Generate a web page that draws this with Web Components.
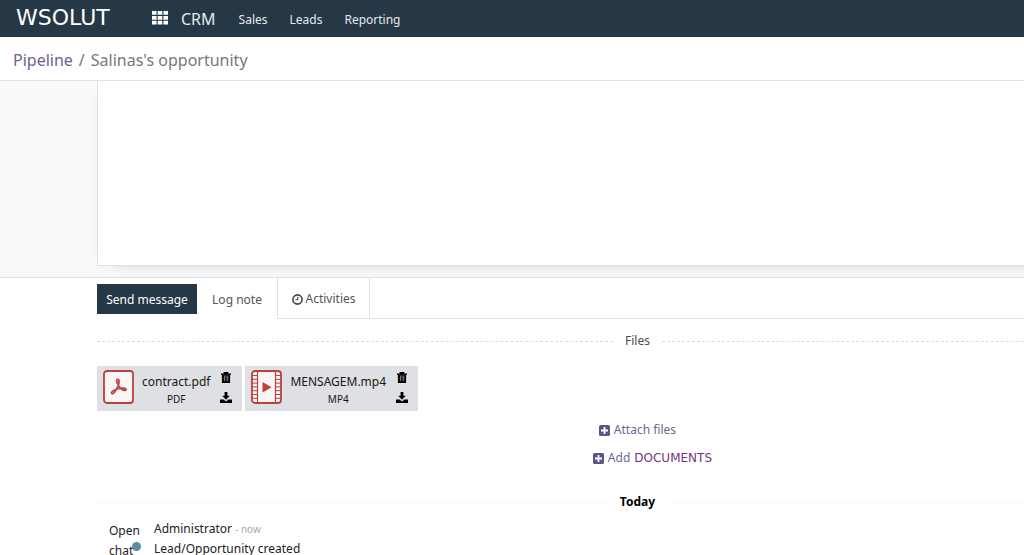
<!DOCTYPE html>
<html lang="en">
<head>
<meta charset="utf-8">
<title>Salinas's opportunity</title>
<style>
body { margin: 0; background: #fff; font-family: "Noto Sans", sans-serif; font-size: 12px; line-height: 20px; color: #4c4c4c; overflow: hidden; }
</style>
</head>
<body>
<crm-page></crm-page>
<script>
const define = (name, html) => {
  const t = document.createElement('template');
  t.innerHTML = html;
  customElements.define(name, class extends HTMLElement {
    constructor() {
      super();
      this.attachShadow({ mode: 'open' }).append(t.content.cloneNode(true));
      this.shadowRoot.querySelectorAll('[data-attr]').forEach(n => {
        n.textContent = this.getAttribute(n.dataset.attr) || '';
      });
    }
  });
};

define('crm-navbar', `
<style>
:host { display: flex; align-items: center; height: 37px; padding-left: 16px; background: #263746; border-bottom: 1px solid #1f2f3b; box-sizing: border-box; color: #e4eaee; }
a { color: inherit; text-decoration: none; }
.logo { width: 136px; font: 22px/24px "DejaVu Sans", sans-serif; color: #fff; }
button { display: flex; padding: 0; border: 0; background: none; color: #fff; margin-right: 13px; }
.app { font-size: 16px; margin-right: 23px; padding-top: 2px; }
nav { display: flex; gap: 22px; padding-top: 3px; }
</style>
<a class="logo" href="#">WSOLUT</a>
<button aria-label="Apps"><svg width="16" height="14" viewBox="0 0 16 14" fill="currentColor"><path d="M0 0h4.6v3.8H0zM5.7 0h4.6v3.8H5.7zM11.4 0H16v3.8h-4.6zM0 4.9h4.6v3.8H0zM5.7 4.9h4.6v3.8H5.7zM11.4 4.9H16v3.8h-4.6zM0 9.8h4.6v3.8H0zM5.7 9.8h4.6v3.8H5.7zM11.4 9.8H16v3.8h-4.6z"/></svg></button>
<a class="app" href="#">CRM</a>
<nav><a href="#">Sales</a><a href="#">Leads</a><a href="#">Reporting</a></nav>`);

define('crm-breadcrumb', `
<style>
:host { display: flex; gap: 6px; padding: 12px 13px 9px; font-size: 16px; line-height: 22px; color: #777; border-bottom: 1px solid #dfe1e3; }
a { color: #6f6294; text-decoration: none; }
</style>
<a href="#">Pipeline</a><span>/</span><span>Salinas's opportunity</span>`);

define('crm-sheet', `
<style>
:host { display: block; background: #f8f9fb; padding: 0 97px 11px; border-bottom: 1px solid #dde0e4; overflow: hidden; }
div { min-height: 184px; background: #fff; border: 1px solid #dfe1e3; border-top: 0; box-shadow: 0 5px 20px -15px rgba(0, 0, 0, .4); }
</style>
<div></div>`);

define('crm-tabs', `
<style>
:host { display: flex; height: 41px; }
button { font: inherit; line-height: 20px; color: #555; background: none; border: 0; padding: 0; }
.send { align-self: flex-start; margin-top: 6px; padding-top: 1px; width: 100px; height: 30px; background: #263746; color: #fff; }
.note { width: 80px; padding-top: 2px; }
.act { display: flex; align-items: center; justify-content: center; gap: 3px; width: 93px; padding-top: 2px; border: solid #e1e3e5; border-width: 0 1px 1px; }
.rest { flex: 1; border-bottom: 1px solid #e1e3e5; }
</style>
<button class="send">Send message</button><button class="note">Log note</button><button class="act"><svg width="11" height="11" viewBox="0 0 11 11" fill="none" stroke="#444"><circle cx="5.5" cy="5.5" r="4.6" stroke-width="1.6"/><path d="M5.7 2.8V5.8H3.4" stroke-width="1.1"/></svg>Activities</button><span class="rest"></span>`);

define('crm-divider', `
<style>
:host { display: flex; align-items: center; gap: 12px; }
:host::before, :host::after { content: ""; flex: 1; border-top: 1px var(--line, dashed #d9dbdc); }
</style><slot></slot>`);

define('crm-file', `
<style>
:host { display: flex; height: 45px; box-sizing: border-box; padding: 4px 10px 0 6px; background: #dee0e4; color: #161616; }
.text { display: flex; flex-direction: column; align-items: center; margin: 2px 10px 0 8px; }
.name { line-height: 20px; }
.type { font-size: 10px; line-height: 14px; }
.tools { display: flex; flex-direction: column; gap: 9px; padding-top: 2px; }
button { display: flex; justify-content: center; width: 12px; padding: 0; border: 0; background: none; color: #000; }
</style>
<slot></slot>
<div class="text"><span class="name" data-attr="name"></span><span class="type" data-attr="type"></span></div>
<div class="tools">
<button aria-label="Delete"><svg width="10" height="11" viewBox="0 0 10 11" fill="none" stroke="currentColor"><path d="M0 2.2h10M3.3 2V.7h3.4V2" stroke-width="1.4"/><path d="M1.6 2.5v7.7h6.8V2.5" fill="#222" stroke-width="1.4"/><path d="M3.6 4v4.600M6.400 4v4.600" stroke="#aaa" stroke-width=".7"/></svg></button>
<button aria-label="Download"><svg width="12" height="12" viewBox="0 0 12 12" fill="currentColor"><path d="M4.600 0h2.800v3.800h2.400L6 7.800 2.200 3.800h2.400zM0 7.400h3.600L6 9.600l2.400-2.200H12V11H0z"/></svg></button>
</div>`);

define('icon-pdf', `
<style>:host, svg { display: block; }</style>
<svg width="31" height="34" viewBox="0 0 31 34" fill="none" stroke="#b8423e"><rect x="1" y="1" width="29" height="32" rx="3" fill="#faf6f5" stroke-width="1.800"/><path d="M14.200 9.500c3-.8 1.800 4.200.5 7-1.200 2.900-3.200 7.500-5.500 7.300-2.600-1.200 2.300-4.200 5.500-5 3.200-.8 8.200-1.200 8.400.7-.3 2.200-4.600.3-6.600-2.500-1.700-2.400-4-6.900-2.300-7.500z" stroke-width="1.700"/></svg>`);

define('icon-video', `
<style>:host, svg { display: block; }</style>
<svg width="31" height="34" viewBox="0 0 31 34" fill="none" stroke="#b8423e"><rect x="1" y="1" width="29" height="32" rx="3" fill="#faf6f5" stroke-width="1.800"/><path d="M6.500 1v32M24.500 1v32" stroke-width="1.200"/><path d="M1 5.500h5.500M1 9.300h5.500M1 13.100h5.500M1 16.900h5.500M1 20.700h5.500M1 24.500h5.500M1 28.300h5.500M24.500 5.500H30M24.500 9.300H30M24.500 13.100H30M24.500 16.900H30M24.500 20.700H30M24.500 24.500H30M24.500 28.300H30"/><path d="M11.500 12l9 5.300-9 5.300z" fill="#c03f39" stroke="none"/></svg>`);

define('crm-add', `
<style>
:host { display: flex; justify-content: center; }
a { display: flex; align-items: center; gap: 4px; color: #6c6594; text-decoration: none; }
</style>
<a href="#"><svg width="11" height="11" viewBox="0 0 11 11"><rect width="11" height="11" rx="1.600" fill="#5c5488"/><path d="M5.500 2v7M2 5.500h7" stroke="#fff" stroke-width="1.800"/></svg><slot></slot></a>`);

define('crm-message', `
<style>
:host { display: flex; padding: 7px 12px 0; color: #222; }
.avatar { position: relative; width: 45px; padding-top: 2px; }
.avatar span { display: block; width: 32px; }
.avatar i { position: absolute; left: 23px; top: 23px; width: 9px; height: 9px; border-radius: 50%; background: #5a8ca6; }
p { margin: 0; line-height: 19px; }
small { font-size: 10px; color: #aaa; }
</style>
<div class="avatar"><span>Open chat</span><i></i></div>
<div><p>Administrator <small>- now</small></p><p>Lead/Opportunity created</p></div>`);

define('crm-page', `
<style>
:host { display: block; overflow: hidden; }
.wide { width: 124.5vw; }
.chatter { padding: 0 97px; }
crm-divider { margin-top: 12px; }
.files { display: flex; gap: 3px; margin: 15px 0 9px; }
.docs { margin-top: 8px; padding-left: 30px; }
.brand { font: 12px/20px "DejaVu Sans", sans-serif; color: #76347e; }
.day { margin-top: 24px; --line: solid #f8f8f8; }
h2 { margin: 0; font-size: 12px; line-height: 20px; color: #000; }
</style>
<crm-navbar></crm-navbar>
<crm-breadcrumb></crm-breadcrumb>
<div class="wide">
<crm-sheet></crm-sheet>
<div class="chatter">
<crm-tabs></crm-tabs>
<crm-divider>Files</crm-divider>
<div class="files">
<crm-file name="contract.pdf" type="PDF"><icon-pdf></icon-pdf></crm-file>
<crm-file name="MENSAGEM.mp4" type="MP4"><icon-video></icon-video></crm-file>
</div>
<crm-add>Attach files</crm-add>
<crm-add class="docs">Add <span class="brand">DOCUMENTS</span></crm-add>
<crm-divider class="day"><h2>Today</h2></crm-divider>
<crm-message></crm-message>
</div>
</div>`);
</script>
</body>
</html>
